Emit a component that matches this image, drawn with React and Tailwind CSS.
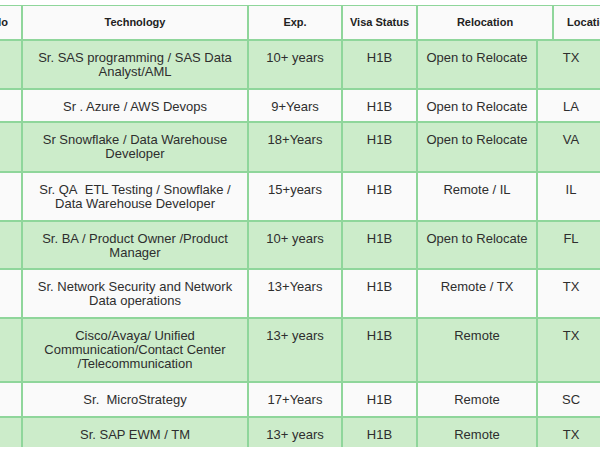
import React from "react";

const rows = [
  { tech: ["Sr. SAS programming / SAS Data", "Analyst/AML"], exp: "10+ years", visa: "H1B", reloc: "Open to Relocate", loc: "TX", h: "h-[49px]", green: true },
  { tech: ["Sr . Azure / AWS Devops"], exp: "9+Years", visa: "H1B", reloc: "Open to Relocate", loc: "LA", h: "h-[33px]" },
  { tech: ["Sr Snowflake / Data Warehouse", "Developer"], exp: "18+Years", visa: "H1B", reloc: "Open to Relocate", loc: "VA", h: "h-[50px]", green: true },
  { tech: ["Sr. QA\u00a0 ETL Testing / Snowflake /", "Data Warehouse Developer"], exp: "15+years", visa: "H1B", reloc: "Remote / IL", loc: "IL", h: "h-[49px]" },
  { tech: ["Sr. BA / Product Owner /Product", "Manager"], exp: "10+ years", visa: "H1B", reloc: "Open to Relocate", loc: "FL", h: "h-[48px]", green: true },
  { tech: ["Sr. Network Security and Network", "Data operations"], exp: "13+Years", visa: "H1B", reloc: "Remote / TX", loc: "TX", h: "h-[49px]" },
  { tech: ["Cisco/Avaya/ Unified", "Communication/Contact Center", "/Telecommunication"], exp: "13+ years", visa: "H1B", reloc: "Remote", loc: "TX", h: "h-[64px]", green: true },
  { tech: ["Sr.\u00a0 MicroStrategy"], exp: "17+Years", visa: "H1B", reloc: "Remote", loc: "SC", h: "h-[35px]" },
  { tech: ["Sr. SAP EWM / TM"], exp: "13+ years", visa: "H1B", reloc: "Remote", loc: "TX", h: "h-[30px]", green: true, last: true },
];

const td = "border-2 border-[#8fd69b] align-top pt-[10px] text-center";

export default function App() {
  return (
    <div className="w-[600px] h-[450px] overflow-hidden bg-white font-['Liberation_Sans',Arial,sans-serif]">
      <div className="-ml-[32px] pt-[5px] w-[700px]">
        <table className="table-fixed border-collapse bg-[#fafafa]">
          <colgroup>
            <col className="w-[53px]" />
            <col className="w-[226px]" />
            <col className="w-[94px]" />
            <col className="w-[75px]" />
            <col className="w-[136px]" />
            <col className="w-[74px]" />
          </colgroup>
          <thead>
            <tr className="h-[33px] text-[11px] font-bold text-[#222]">
              {["S.No", "Technology", "Exp.", "Visa Status", "Relocation", "Location"].map((h) => (
                <th key={h} className="border-2 border-t-[1.5px] border-b-0 border-[#8fd69b] text-center align-middle whitespace-nowrap">
                  {h}
                </th>
              ))}
            </tr>
          </thead>
        </table>
        <table className="table-fixed border-collapse text-[13px] leading-[14px] text-[#2e2e2e]">
          <colgroup>
            <col className="w-[53px]" />
            <col className="w-[226px]" />
            <col className="w-[94px]" />
            <col className="w-[75px]" />
            <col className="w-[120px]" />
            <col className="w-[68px]" />
          </colgroup>
          <tbody>
            {rows.map((r, i) => {
              const cell = r.last ? `${td} border-b-0` : td;
              return (
                <tr key={i} className={`${r.h} ${r.green ? "bg-[#ccecca]" : "bg-[#fafafa]"}`}>
                  <td className={cell}></td>
                  <td className={cell}>
                    {r.tech.map((t, j) => (
                      <div key={j} className="whitespace-nowrap">{t}</div>
                    ))}
                  </td>
                  <td className={cell}>{r.exp}</td>
                  <td className={cell}>{r.visa}</td>
                  <td className={cell}>{r.reloc}</td>
                  <td className={cell}>{r.loc}</td>
                </tr>
              );
            })}
          </tbody>
        </table>
      </div>
    </div>
  );
}
